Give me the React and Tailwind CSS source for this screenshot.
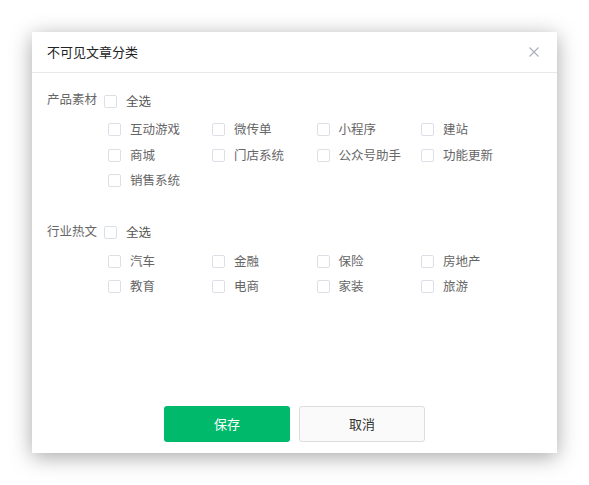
const groups = [
  {
    label: "产品素材",
    items: ["互动游戏", "微传单", "小程序", "建站", "商城", "门店系统", "公众号助手", "功能更新", "销售系统"],
  },
  {
    label: "行业热文",
    items: ["汽车", "金融", "保险", "房地产", "教育", "电商", "家装", "旅游"],
  },
];

const Box = () => (
  <span className="inline-block h-[13px] w-[13px] shrink-0 rounded-[2px] border border-[#dcdfe6] bg-white" />
);

const Group = ({ label, items, className }) => (
  <div className={"flex " + className}>
    <div className="h-[22px] w-[57px] shrink-0 leading-[22px] text-[#666]">{label}</div>
    <div className="flex flex-col">
      <label className="flex h-[26px] items-center gap-[9px] text-[#555]">
        <Box />
        <span>全选</span>
      </label>
      <div className="ml-[4px] mt-[3px] grid grid-cols-[104px_104.5px_104.5px_104px]">
        {items.map((item) => (
          <label key={item} className="flex h-[25.5px] items-center gap-[9px] text-[#666]">
            <Box />
            <span>{item}</span>
          </label>
        ))}
      </div>
    </div>
  </div>
);

export default function App() {
  return (
    <div
      className="min-h-[485px] bg-white pl-8 pt-8 text-[12.5px]"
      style={{ fontFamily: '"Noto Sans CJK SC", "Noto Sans", sans-serif' }}
    >
      <div className="flex h-[421px] w-[525px] flex-col bg-white shadow-[0_4px_20px_rgba(0,0,0,0.35)]">
        <div className="flex h-[41px] shrink-0 items-center justify-between border-b border-[#e8e8e8] pl-[15px] pr-[18px]">
          <span className="text-[13px] text-[#222]">不可见文章分类</span>
          <svg width="10" height="10" viewBox="0 0 10 10" className="mt-[-1px]">
            <path d="M0.5 0.5 L9.5 9.5 M9.5 0.5 L0.5 9.5" stroke="#a9aeb8" strokeWidth="1.1" />
          </svg>
        </div>
        <div className="pl-[15px] pt-[15px]">
          {groups.map((g, i) => (
            <Group key={g.label} {...g} className={i > 0 ? "mt-[26px]" : ""} />
          ))}
        </div>
        <div className="mt-auto flex justify-center gap-[9px] pb-[11px]">
          <button className="h-9 w-[126px] rounded-[3px] bg-[#00b96b] text-[13px] text-white">保存</button>
          <button className="h-9 w-[126px] rounded-[3px] border border-[#dcdcdc] bg-[#fafafa] text-[13px] text-[#333]">
            取消
          </button>
        </div>
      </div>
    </div>
  );
}
